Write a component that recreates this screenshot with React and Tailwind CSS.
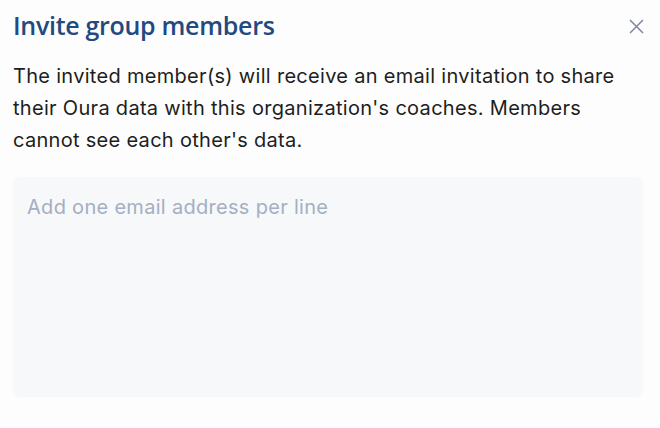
import React, { useState } from 'react';

const InviteMembersDialog = () => {
  const [emails, setEmails] = useState('');

  return (
    <div className="w-[660px] h-[428px] bg-[#fdfdfd] px-[13px] pt-[8px] font-['Inter',sans-serif]">
      <div className="flex items-start justify-between">
        <h2 className="text-[25px] leading-[34px] font-semibold text-[#224a80] font-['Open_Sans',sans-serif] tracking-[-0.3px]">
          Invite group members
        </h2>
        <button className="mt-[11px] mr-[3px] text-[#7e86a3]" aria-label="Close">
          <svg width="15" height="15" viewBox="0 0 15 15" fill="none" stroke="currentColor" strokeWidth="1.5">
            <path d="M1 1l13 13M14 1L1 14" />
          </svg>
        </button>
      </div>

      <p className="mt-[18px] w-[630px] text-[20px] leading-[32px] tracking-[0.3px] text-[#1e1e1e]">
        The invited member(s) will receive an email invitation to share their Oura data with this
        organization's coaches. Members cannot see each other's data.
      </p>

      <textarea
        value={emails}
        onChange={(e) => setEmails(e.target.value)}
        placeholder="Add one email address per line"
        className="mt-[21px] block w-[630px] h-[220px] resize-none rounded-[8px] bg-[#f7f8fa] px-[14px] py-[14px] text-[20px] leading-[32px] tracking-[0.3px] text-[#1e1e1e] placeholder:text-[#a3afc2] outline-none"
      />
    </div>
  );
};

export default function App() {
  return <InviteMembersDialog />;
}
